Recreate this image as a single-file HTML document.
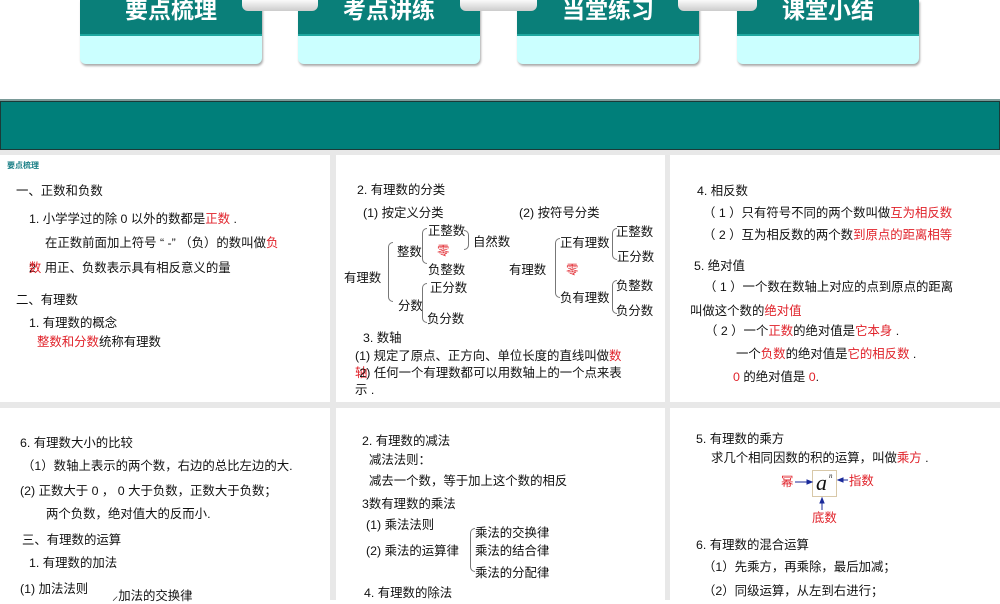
<!DOCTYPE html>
<html><head><meta charset="utf-8"><style>
*{margin:0;padding:0;box-sizing:border-box}
body{width:1000px;height:600px;overflow:hidden;background:#fff;position:relative;font-family:"Liberation Sans","Noto Sans CJK SC",sans-serif;font-size:12.4px;color:#111}
.a{position:absolute;white-space:nowrap;line-height:16px}
.r{color:#e0222a}
.tab{position:absolute;top:0;width:182px;height:64px;background:#cbffff;border-radius:0 0 6px 6px;box-shadow:1px 2px 2px #aaa;overflow:hidden}
.tab .t{height:36px;background:#0a7f79;border-bottom:2px solid #1fa79f;color:#fff;font-weight:bold;font-size:23px;text-align:center;line-height:20px}
.ring{position:absolute;top:0;height:11px;background:linear-gradient(#fafafa,#ccc);border-radius:0 0 6px 6px}
.dot{position:absolute;top:-4px;width:14px;height:14px;border-radius:50%;border:2px solid #8a8a3a;background:#eee}
.p{position:absolute;background:#fff}
.br{position:absolute;border:1px solid #777;border-right:none;border-radius:6px 0 0 6px;width:5px}
</style></head><body>
<div class="tab" style="left:80px"><div class="t">要点梳理</div></div>
<div class="tab" style="left:298px"><div class="t">考点讲练</div></div>
<div class="tab" style="left:517px"><div class="t">当堂练习</div></div>
<div class="tab" style="left:737px"><div class="t">课堂小结</div></div>
<div class="ring" style="left:242px;width:76px"></div>
<div class="ring" style="left:460px;width:77px"></div>
<div class="ring" style="left:678px;width:79px"></div>

<div style="position:absolute;left:0;top:99px;width:1000px;height:3px;background:#7a9a98"></div>
<div style="position:absolute;left:0;top:101px;width:1000px;height:49px;background:#007f7a;border:1px solid #1b3a38"></div>
<div style="position:absolute;left:0;top:150px;width:1000px;height:450px;background:#e8e8e8"></div>
<div class="p" style="left:0;top:155px;width:330px;height:247px"></div>
<div class="p" style="left:336px;top:155px;width:329px;height:247px"></div>
<div class="p" style="left:670px;top:155px;width:330px;height:247px"></div>
<div class="p" style="left:0;top:408px;width:330px;height:192px"></div>
<div class="p" style="left:336px;top:408px;width:329px;height:192px"></div>
<div class="p" style="left:670px;top:408px;width:330px;height:192px"></div>

<div class="a" style="left:7px;top:158px;font-size:8px;color:#1a7f86;font-weight:bold">要点梳理</div>
<div class="a" style="left:16px;top:183px">一、正数和负数</div>
<div class="a" style="left:29px;top:211px">1. 小学学过的除 0 以外的数都是<span class="r">正数</span> .</div>
<div class="a" style="left:45px;top:235px">在正数前面加上符号 “ -” （负）的数叫做<span class="r">负</span></div>
<div class="a" style="left:29px;top:260px">2<span class="r" style="margin-left:-7px">数</span> 用正、负数表示具有相反意义的量</div>
<div class="a" style="left:16px;top:292px">二、有理数</div>
<div class="a" style="left:29px;top:315px">1. 有理数的概念</div>
<div class="a" style="left:37px;top:334px"><span class="r">整数和分数</span>统称有理数</div>

<div class="a" style="left:357px;top:182px">2. 有理数的分类</div>
<div class="a" style="left:363px;top:205px">(1) 按定义分类</div>
<div class="a" style="left:519px;top:205px">(2) 按符号分类</div>
<div class="a" style="left:344px;top:270px">有理数</div>
<div class="br" style="left:388px;top:242px;height:60px"></div>
<div class="a" style="left:397px;top:244px">整数</div>
<div class="a" style="left:398px;top:298px">分数</div>
<div class="br" style="left:422px;top:228px;height:36px"></div>
<div class="br" style="left:422px;top:283px;height:40px"></div>
<div class="a" style="left:428px;top:223px">正整数</div>
<div class="a r" style="left:437px;top:243px">零</div>
<div class="a" style="left:428px;top:262px">负整数</div>
<div class="a" style="left:430px;top:280px">正分数</div>
<div class="a" style="left:427px;top:311px">负分数</div>
<div style="position:absolute;left:464px;top:230px;width:5px;height:20px;border:1px solid #777;border-left:none;border-radius:0 6px 6px 0"></div>
<div class="a" style="left:473px;top:234px">自然数</div>
<div class="a" style="left:509px;top:262px">有理数</div>
<div class="br" style="left:555px;top:238px;height:60px"></div>
<div class="a" style="left:560px;top:235px">正有理数</div>
<div class="a r" style="left:566px;top:262px">零</div>
<div class="a" style="left:560px;top:290px">负有理数</div>
<div class="br" style="left:612px;top:228px;height:32px"></div>
<div class="br" style="left:612px;top:280px;height:34px"></div>
<div class="a" style="left:616px;top:224px">正整数</div>
<div class="a" style="left:617px;top:249px">正分数</div>
<div class="a" style="left:616px;top:278px">负整数</div>
<div class="a" style="left:616px;top:303px">负分数</div>
<div class="a" style="left:363px;top:330px">3. 数轴</div>
<div class="a" style="left:355px;top:348px">(1) 规定了原点、正方向、单位长度的直线叫做<span class="r">数</span></div>
<div class="a" style="left:355px;top:365px"><span class="r">轴</span><span style="margin-left:-8px">2)</span> 任何一个有理数都可以用数轴上的一个点来表</div>
<div class="a" style="left:355px;top:382px">示 .</div>

<div class="a" style="left:697px;top:183px">4. 相反数</div>
<div class="a" style="left:703px;top:205px">（ 1 ）只有符号不同的两个数叫做<span class="r">互为相反数</span></div>
<div class="a" style="left:703px;top:227px">（ 2 ）互为相反数的两个数<span class="r">到原点的距离相等</span></div>
<div class="a" style="left:694px;top:258px">5. 绝对值</div>
<div class="a" style="left:704px;top:279px">（ 1 ）一个数在数轴上对应的点到原点的距离</div>
<div class="a" style="left:690px;top:303px">叫做这个数的<span class="r">绝对值</span></div>
<div class="a" style="left:705px;top:323px">（ 2 ）一个<span class="r">正数</span>的绝对值是<span class="r">它本身</span> .</div>
<div class="a" style="left:736px;top:346px">一个<span class="r">负数</span>的绝对值是<span class="r">它的相反数</span> .</div>
<div class="a" style="left:733px;top:369px"><span class="r">0</span> 的绝对值是 <span class="r">0</span>.</div>

<div class="a" style="left:20px;top:435px">6. 有理数大小的比较</div>
<div class="a" style="left:22px;top:458px">（1）数轴上表示的两个数，右边的总比左边的大.</div>
<div class="a" style="left:20px;top:483px">(2) 正数大于 0 ， 0 大于负数，正数大于负数；</div>
<div class="a" style="left:46px;top:506px">两个负数，绝对值大的反而小.</div>
<div class="a" style="left:22px;top:532px">三、有理数的运算</div>
<div class="a" style="left:29px;top:555px">1. 有理数的加法</div>
<div class="a" style="left:20px;top:581px">(1) 加法法则</div>
<div class="a" style="left:112px;top:588px">⸝加法的交换律</div>

<div class="a" style="left:362px;top:433px">2. 有理数的减法</div>
<div class="a" style="left:369px;top:452px">减法法则：</div>
<div class="a" style="left:369px;top:473px">减去一个数，等于加上这个数的相反</div>
<div class="a" style="left:362px;top:496px">3数有理数的乘法</div>
<div class="a" style="left:366px;top:517px">(1) 乘法法则</div>
<div class="a" style="left:366px;top:543px">(2) 乘法的运算律</div>
<div class="br" style="left:470px;top:528px;height:44px"></div>
<div class="a" style="left:475px;top:525px">乘法的交换律</div>
<div class="a" style="left:475px;top:543px">乘法的结合律</div>
<div class="a" style="left:475px;top:565px">乘法的分配律</div>
<div class="a" style="left:364px;top:585px">4. 有理数的除法</div>

<div class="a" style="left:696px;top:431px">5. 有理数的乘方</div>
<div class="a" style="left:711px;top:450px">求几个相同因数的积的运算，叫做<span class="r">乘方</span> .</div>
<div style="position:absolute;left:812px;top:470px;width:25px;height:27px;border:1px solid #d8c8a8"></div>
<div class="a" style="left:816px;top:472px;font-family:'Liberation Serif',serif;font-style:italic;font-size:22px;line-height:22px">a</div>
<div class="a" style="left:829px;top:472px;font-family:'Liberation Serif',serif;font-style:italic;font-size:7px;line-height:8px">n</div>
<div class="a r" style="left:781px;top:474px">幂</div>
<div class="a r" style="left:849px;top:473px">指数</div>
<div class="a r" style="left:812px;top:510px">底数</div>
<svg style="position:absolute;left:0;top:0" width="1000" height="600">
<g stroke="#1a2a9a" fill="#1a2a9a" stroke-width="1">
<line x1="795" y1="482" x2="809" y2="482"/><polygon points="812,482 807,480 807,484"/>
<line x1="841" y1="480" x2="848" y2="480"/><polygon points="838,480 843,478 843,482"/>
<line x1="822" y1="510" x2="822" y2="501"/><polygon points="822,498 820,503 824,503"/>
</g></svg>
<div class="a" style="left:696px;top:537px">6. 有理数的混合运算</div>
<div class="a" style="left:703px;top:559px">（1）先乘方，再乘除，最后加减；</div>
<div class="a" style="left:703px;top:583px">（2）同级运算，从左到右进行；</div>
</body></html>
